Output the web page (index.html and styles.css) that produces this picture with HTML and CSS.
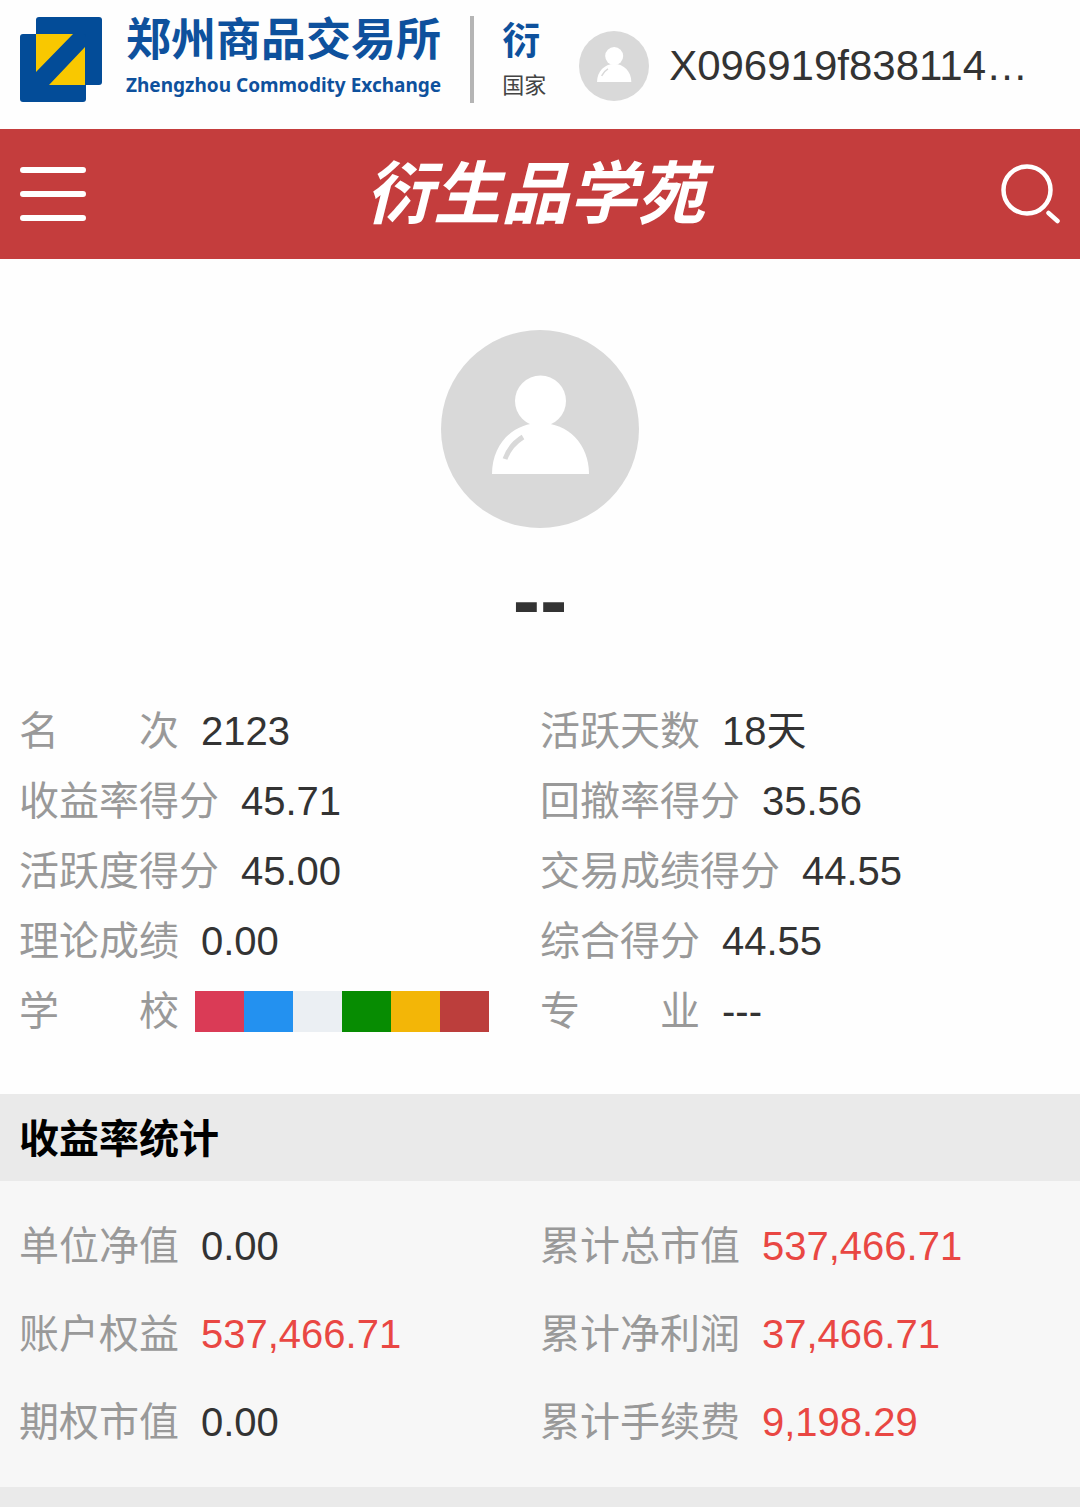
FILE: index.html
```html
<!DOCTYPE html>
<html lang="zh-CN">
<head>
  <meta charset="utf-8">
  <meta name="viewport" content="width=device-width, initial-scale=1.0">
  <title>衍生品学苑</title>
  <link rel="stylesheet" href="styles.css">
</head>
<body>
  <!-- 顶部 -->
  <header class="top">
    <svg class="logo" viewBox="0 0 82 85">
      <rect x="16" y="0" width="66" height="68" rx="3" fill="#034c98"/>
      <rect x="0" y="17" width="66" height="68" rx="3" fill="#034c98"/>
      <path d="M16 17H53L16 55Z M65 30V68H29Z" fill="#f9c800"/>
    </svg>
    <div class="brand">
      <div class="brand-cn">郑州商品交易所</div>
      <div class="brand-en">Zhengzhou Commodity Exchange</div>
    </div>
    <div class="sub-brand">
      <div class="sub-title">衍</div>
      <div class="sub-text">国家</div>
    </div>
    <a class="user" href="#">
      <svg class="user-avatar" viewBox="0 0 198 198">
        <circle cx="99" cy="99" r="99" fill="#d9d9d9"/>
        <circle cx="99.500" cy="71" r="25.500" fill="#fff"/>
        <path d="M51 144C51 114 72 93 99.500 93S148 114 148 144Z" fill="#fff"/>
        <path d="M64 127Q70 114 82 107" fill="none" stroke="#d9d9d9" stroke-width="4"/>
      </svg>
      <span class="user-name">X096919f838114…</span>
    </a>
  </header>

  <!-- 导航 -->
  <nav class="navbar">
    <button class="nav-btn" aria-label="菜单">
      <svg width="66" height="54" viewBox="0 0 66 54" stroke="#fff" stroke-width="6" stroke-linecap="round">
        <path d="M3 3H63M3 27H63M3 51H63"/>
      </svg>
    </button>
    <h1 class="nav-title">衍生品学苑</h1>
    <button class="nav-btn" aria-label="搜索">
      <svg width="60" height="60" viewBox="0 0 60 60" fill="none" stroke="#fff" stroke-width="4.500" stroke-linecap="round">
        <circle cx="27" cy="26" r="23.500"/>
        <path d="M48.500 49L57.500 57"/>
      </svg>
    </button>
  </nav>

  <!-- 个人信息 -->
  <section class="profile">
    <svg class="avatar" viewBox="0 0 198 198">
      <circle cx="99" cy="99" r="99" fill="#d9d9d9"/>
      <circle cx="99.500" cy="71" r="25.500" fill="#fff"/>
      <path d="M51 144C51 114 72 93 99.500 93S148 114 148 144Z" fill="#fff"/>
      <path d="M64 129Q69 115 82 107" fill="none" stroke="#d9d9d9" stroke-width="5"/>
    </svg>
    <h2 class="name">--</h2>
  </section>

  <dl class="info">
    <div class="item"><dt>名　　次</dt><dd>2123</dd></div>
    <div class="item"><dt>活跃天数</dt><dd>18天</dd></div>
    <div class="item"><dt>收益率得分</dt><dd>45.71</dd></div>
    <div class="item"><dt>回撤率得分</dt><dd>35.56</dd></div>
    <div class="item"><dt>活跃度得分</dt><dd>45.00</dd></div>
    <div class="item"><dt>交易成绩得分</dt><dd>44.55</dd></div>
    <div class="item"><dt>理论成绩</dt><dd>0.00</dd></div>
    <div class="item"><dt>综合得分</dt><dd>44.55</dd></div>
    <div class="item">
      <dt>学　　校</dt>
      <dd class="blocks">
        <i class="block crimson"></i>
        <i class="block blue"></i>
        <i class="block light"></i>
        <i class="block green"></i>
        <i class="block yellow"></i>
        <i class="block red"></i>
      </dd>
    </div>
    <div class="item"><dt>专　　业</dt><dd>---</dd></div>
  </dl>

  <!-- 收益率统计 -->
  <section class="stats">
    <h3 class="stats-title">收益率统计</h3>
    <dl class="info stats-list">
      <div class="item"><dt>单位净值</dt><dd>0.00</dd></div>
      <div class="item"><dt>累计总市值</dt><dd class="up">537,466.71</dd></div>
      <div class="item"><dt>账户权益</dt><dd class="up">537,466.71</dd></div>
      <div class="item"><dt>累计净利润</dt><dd class="up">37,466.71</dd></div>
      <div class="item"><dt>期权市值</dt><dd>0.00</dd></div>
      <div class="item"><dt>累计手续费</dt><dd class="up">9,198.29</dd></div>
    </dl>
  </section>
</body>
</html>
```
FILE: styles.css
```css
body {
  margin: 0;
  font-family: "Liberation Sans", "Noto Sans CJK SC", sans-serif;
  font-size: 40px;
  color: #333;
  background: #fefefe;
}
h1, h2, h3, dl, dd { margin: 0; }

/* 顶部 */
.top {
  display: flex; align-items: center;
  height: 129px; box-sizing: border-box;
  padding: 0 52px 10px 20px;
}
.logo { width: 82px; height: 85px; flex: none; }
.brand {
  margin-left: 24px; padding-right: 29px;
  border-right: 4px solid #b5b5b5;
  color: #0e519d; font-weight: bold; white-space: nowrap;
}
.brand-cn { font-size: 45px; line-height: 50px; }
.brand-en {
  font-family: "Noto Sans", sans-serif;
  font-size: 19px; line-height: 35px; padding-top: 2px;
}
.sub-brand { margin-left: 28px; white-space: nowrap; }
.sub-title { font-size: 38px; line-height: 50px; font-weight: bold; color: #0e519d; }
.sub-text { font-size: 22px; line-height: 35px; padding-top: 2px; color: #444; }
.user {
  display: flex; align-items: center; gap: 20px;
  margin-left: auto; padding-top: 12px;
  color: inherit; text-decoration: none;
}
.user-avatar { width: 70px; height: 70px; flex: none; }
.user-name { font-size: 42px; white-space: nowrap; }

/* 导航 */
.navbar {
  display: flex; justify-content: space-between; align-items: center;
  height: 130px; padding: 0 20px;
  background: #c43d3d; color: #fff;
}
.nav-btn {
  display: flex; padding: 0;
  background: none; border: none; cursor: pointer;
}
.nav-title {
  padding-right: 16px;
  font-size: 68px; line-height: 80px; font-style: italic;
}

/* 个人信息 */
.profile {
  display: flex; flex-direction: column; align-items: center;
  padding-top: 71px;
}
.avatar { width: 198px; height: 198px; }
.name {
  margin: 22px 0 46px;
  font-size: 82px; line-height: 100px;
}
.info {
  display: grid; grid-template-columns: 1fr 1fr;
  padding: 0 19px 48px;
  line-height: 70px;
}
.item { display: flex; align-items: center; white-space: nowrap; }
.item dt { color: #999; }
.item dd { margin-left: 22px; }
.item .up { color: #e94743; }
.item .blocks { display: flex; margin-left: 16px; }
.block { width: 49px; height: 41px; }
.crimson { background: #da3b56; }
.blue { background: #2391f0; }
.light { background: #ebeff3; }
.green { background: #078c02; }
.yellow { background: #f3b607; }
.red { background: #bc3e3c; }

/* 收益率统计 */
.stats { background: #f7f7f7; border-bottom: 20px solid #eaeaea; }
.stats-title {
  padding: 4px 19px 0;
  font-size: 40px; line-height: 83px;
  color: #000; background: #eaeaea;
}
.stats-list {
  padding-top: 21px; padding-bottom: 21px;
  line-height: 88px;
}
```
